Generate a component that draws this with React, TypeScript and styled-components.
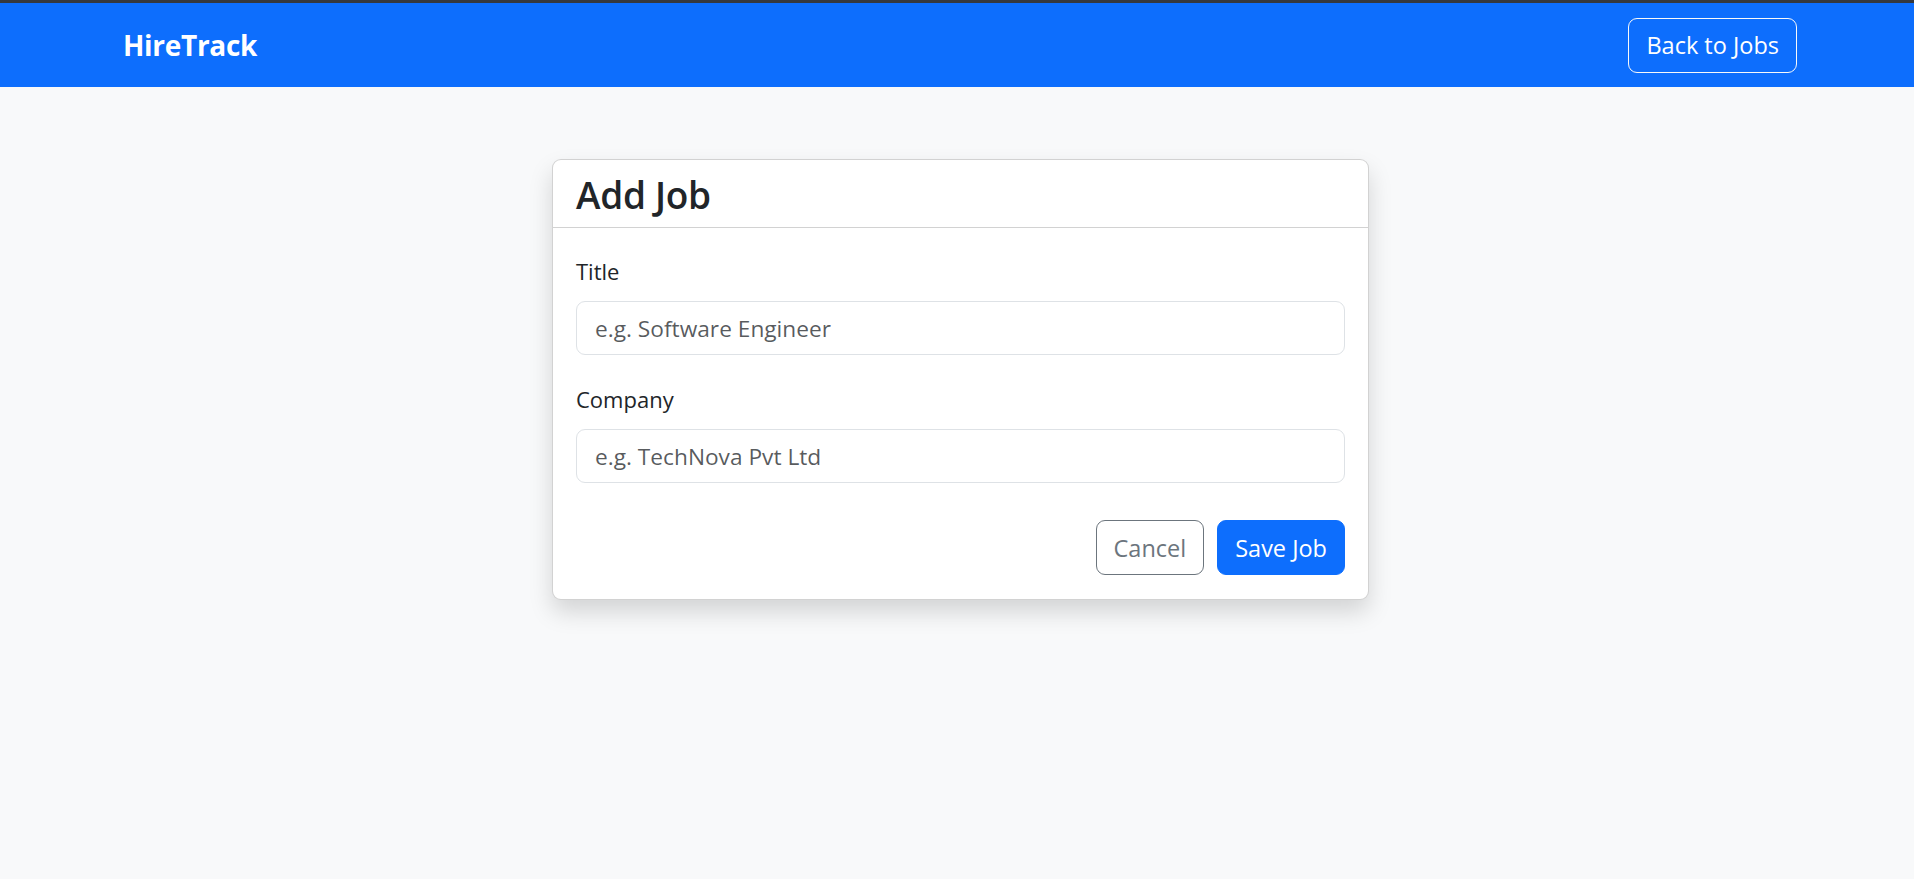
import React from "react";
import styled, { createGlobalStyle } from "styled-components";

const GlobalStyle = createGlobalStyle`
  * { box-sizing: border-box; }
  html, body { margin: 0; padding: 0; }
  body {
    background: #f8f9fa;
    font-family: "Open Sans", "Noto Sans", sans-serif;
    color: #212529;
    min-height: 879px;
  }
`;

const Navbar = styled.header`
  height: 87px;
  background: #0d6efd;
  border-top: 3px solid #35383d;
  display: flex;
  align-items: center;
  justify-content: space-between;
  padding: 0 117px 0 123px;
`;

const Brand = styled.div`
  color: #fff;
  font-weight: 700;
  font-size: 28px;
  letter-spacing: -0.3px;
`;

const Button = styled.button<{ $variant: "light" | "secondary" | "primary" }>`
  height: 55px;
  padding: 0 17px;
  border-radius: 9px;
  font-family: inherit;
  font-size: 23.5px;
  font-weight: 400;
  cursor: pointer;
  border: 1px solid
    ${(p) =>
      p.$variant === "light" ? "#f8f9fa" : p.$variant === "secondary" ? "#6c757d" : "#0d6efd"};
  background: ${(p) => (p.$variant === "primary" ? "#0d6efd" : "transparent")};
  color: ${(p) => (p.$variant === "secondary" ? "#6c757d" : "#fff")};
`;

const Main = styled.main`
  display: flex;
  justify-content: center;
  padding: 72px 0 0 7px;
`;

const Card = styled.section`
  width: 817px;
  background: #fff;
  border: 1px solid rgba(0, 0, 0, 0.175);
  border-radius: 9px;
  box-shadow: 0 12px 23px rgba(0, 0, 0, 0.15);
`;

const CardHeader = styled.div`
  padding: 14px 23px 11px;
  border-bottom: 1px solid rgba(0, 0, 0, 0.175);
`;

const CardTitle = styled.h4`
  margin: 0;
  font-size: 37px;
  line-height: 42px;
  font-weight: 600;
  letter-spacing: -0.3px;
`;

const CardBody = styled.div`
  padding: 26px 23px 24px;
`;

const Field = styled.div`
  display: flex;
  flex-direction: column;
  & + & { margin-top: 27px; }
`;

const Label = styled.label`
  font-size: 22px;
  line-height: 35px;
  margin-bottom: 12px;
`;

const Input = styled.input`
  height: 54px;
  padding: 0 18px;
  border: 1px solid #dee2e6;
  border-radius: 9px;
  font-family: inherit;
  font-size: 22.7px;
  color: #212529;
  &::placeholder { color: rgba(33, 37, 41, 0.75); opacity: 1; }
  &:focus { outline: none; }
`;

const Actions = styled.div`
  display: flex;
  justify-content: flex-end;
  gap: 13px;
  margin-top: 37px;
`;

export default function App() {
  return (
    <>
      <GlobalStyle />
      <Navbar>
        <Brand>HireTrack</Brand>
        <Button $variant="light">Back to Jobs</Button>
      </Navbar>
      <Main>
        <Card>
          <CardHeader>
            <CardTitle>Add Job</CardTitle>
          </CardHeader>
          <CardBody>
            <Field>
              <Label htmlFor="title">Title</Label>
              <Input id="title" placeholder="e.g. Software Engineer" />
            </Field>
            <Field>
              <Label htmlFor="company">Company</Label>
              <Input id="company" placeholder="e.g. TechNova Pvt Ltd" />
            </Field>
            <Actions>
              <Button $variant="secondary">Cancel</Button>
              <Button $variant="primary">Save Job</Button>
            </Actions>
          </CardBody>
        </Card>
      </Main>
    </>
  );
}
